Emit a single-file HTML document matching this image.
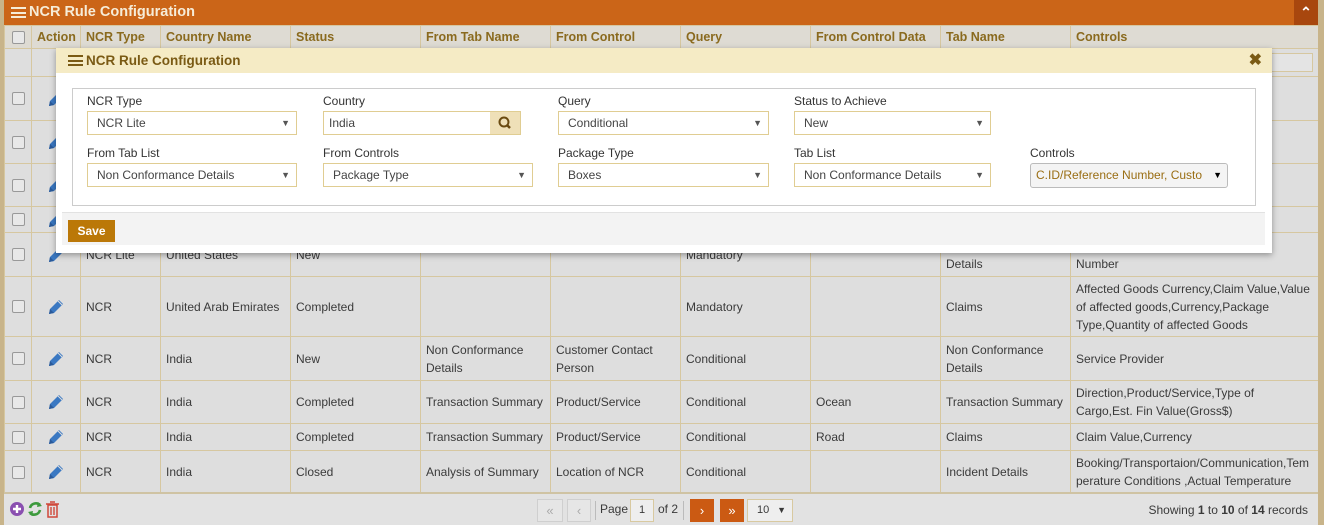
<!DOCTYPE html>
<html><head><meta charset="utf-8">
<style>
*{box-sizing:border-box;margin:0;padding:0}
body{width:1324px;height:525px;overflow:hidden;background:#c8b48a;font-family:"Liberation Sans",sans-serif;font-size:12px;color:#3a3a3a;position:relative}
.wrap{position:absolute;left:4px;top:0;width:1314px;height:525px;background:#dedede;overflow:hidden}
.title{position:absolute;left:0;top:0;width:1314px;height:25px;background:#cb6518;color:#f6ecd8;font-weight:bold;font-size:14.5px;line-height:25px;padding-left:25px}
.ham{position:absolute;width:15px;height:11px;border-top:2px solid;border-bottom:2px solid}
.ham:after{content:"";position:absolute;left:0;right:0;top:2.5px;height:2px;background:currentColor}
.up{position:absolute;right:0;top:0;width:24px;height:25px;background:#a8470e;color:#fff;text-align:center;font-size:14px}
table{position:absolute;left:0;top:25px;width:1314px;border-collapse:collapse;table-layout:fixed}
td,th{border:1px solid #d6c7a0;padding:0 5px;vertical-align:middle;line-height:18px;overflow:hidden}
th{background:#dedbd3;color:#8a6a1e;font-weight:bold;text-align:left;height:23px;font-size:12.5px;white-space:nowrap}
td{background:#dedede}
.cb{width:13px;height:13px;border:1px solid #999;border-radius:2px;background:#e8e8e8;margin:auto}
.pen{display:block;margin:auto}
.modal{position:absolute;left:56px;top:48px;width:1216px;height:205px;background:#fff;box-shadow:0 2px 6px rgba(0,0,0,.35)}
.mh{height:25px;background:#f5ebc5;color:#7a5a14;font-weight:bold;font-size:13.5px;line-height:25px;padding-left:30px;position:relative}
.fs{position:absolute;left:16px;top:40px;width:1184px;height:118px;border:1px solid #ccc}
.lbl{position:absolute;font-size:12px;color:#333}
.sel{position:absolute;height:24px;border:1px solid #e0cd92;font-size:12px;line-height:22px;padding-left:9px;color:#444;background:#fff}
.sel i{position:absolute;right:6px;top:0;font-style:normal;font-size:9px;color:#555}
.mf{position:absolute;left:6px;top:164px;width:1203px;height:33px;background:#f3f3f3;border-top:1px solid #e2e2e2}
.save{position:absolute;left:6px;top:7px;width:47px;height:22px;background:#bb7808;color:#fff;font-weight:bold;font-size:12px;line-height:22px;text-align:center}
.foot{position:absolute;left:0;top:492px;width:1314px;height:33px;background:#e2e2e2;border-top:2px solid #cfc3a3}
.pb{position:absolute;top:5px;height:23px;border:1px solid #cfcfcf;background:#e6e6e6;color:#aaa;text-align:center;line-height:21px;font-size:13px}
.pbo{background:#cb5a13;border-color:#cb5a13;color:#fff}
</style></head><body>
<div class="wrap">
<div class="title"><span class="ham" style="left:7px;top:7px;color:#f6ecd8"></span>NCR Rule Configuration<div class="up">&#8963;</div></div>
<table>
<colgroup><col style="width:27px"><col style="width:49px"><col style="width:80px"><col style="width:130px"><col style="width:130px"><col style="width:130px"><col style="width:130px"><col style="width:130px"><col style="width:130px"><col style="width:130px"><col style="width:248px"></colgroup>
<tr><th><div class="cb"></div></th><th>Action</th><th>NCR Type</th><th>Country Name</th><th>Status</th><th>From Tab Name</th><th>From Control</th><th>Query</th><th>From Control Data</th><th>Tab Name</th><th>Controls</th></tr>
<tr style="height:28px"><td></td><td></td><td></td><td></td><td></td><td></td><td></td><td></td><td></td><td></td><td><div style="height:19px;border:1px solid #d6c7a0;background:#e4e4e4"></div></td></tr>
<tr style="height:44px"><td><div class="cb"></div></td><td>P</td><td></td><td></td><td></td><td></td><td></td><td></td><td></td><td></td><td></td></tr>
<tr style="height:43px"><td><div class="cb"></div></td><td>P</td><td></td><td></td><td></td><td></td><td></td><td></td><td></td><td></td><td></td></tr>
<tr style="height:43px"><td><div class="cb"></div></td><td>P</td><td></td><td></td><td></td><td></td><td></td><td></td><td></td><td></td><td></td></tr>
<tr style="height:26px"><td><div class="cb"></div></td><td>P</td><td></td><td></td><td></td><td></td><td></td><td></td><td></td><td></td><td></td></tr>
<tr style="height:44px"><td><div class="cb"></div></td><td>P</td><td>NCR Lite</td><td>United States</td><td>New</td><td></td><td></td><td>Mandatory</td><td></td><td>Non Conformance Details</td><td>C.ID/Reference<br>Number</td></tr>
<tr style="height:60px"><td><div class="cb"></div></td><td>P</td><td>NCR</td><td style="white-space:nowrap">United Arab Emirates</td><td>Completed</td><td></td><td></td><td>Mandatory</td><td></td><td>Claims</td><td>Affected Goods Currency,Claim Value,Value<br>of affected goods,Currency,Package<br>Type,Quantity of affected Goods</td></tr>
<tr style="height:44px"><td><div class="cb"></div></td><td>P</td><td>NCR</td><td>India</td><td>New</td><td>Non Conformance Details</td><td>Customer Contact Person</td><td>Conditional</td><td></td><td>Non Conformance Details</td><td>Service Provider</td></tr>
<tr style="height:43px"><td><div class="cb"></div></td><td>P</td><td>NCR</td><td>India</td><td>Completed</td><td style="white-space:nowrap">Transaction Summary</td><td>Product/Service</td><td>Conditional</td><td>Ocean</td><td style="white-space:nowrap">Transaction Summary</td><td>Direction,Product/Service,Type of<br>Cargo,Est. Fin Value(Gross$)</td></tr>
<tr style="height:27px"><td><div class="cb"></div></td><td>P</td><td>NCR</td><td>India</td><td>Completed</td><td style="white-space:nowrap">Transaction Summary</td><td>Product/Service</td><td>Conditional</td><td>Road</td><td>Claims</td><td>Claim Value,Currency</td></tr>
<tr style="height:43px"><td><div class="cb"></div></td><td>P</td><td>NCR</td><td>India</td><td>Closed</td><td style="white-space:nowrap">Analysis of Summary</td><td>Location of NCR</td><td>Conditional</td><td></td><td>Incident Details</td><td style="word-break:break-all">Booking/Transportaion/Communication,Temperature Conditions ,Actual Temperature</td></tr>
</table>
<div class="foot">
<svg style="position:absolute;left:5px;top:6px" width="50" height="18"><circle cx="8" cy="9" r="7" fill="#8a4fb0"/><path d="M8 5v8M4 9h8" stroke="#fff" stroke-width="2.4"/><path d="M21 8a6 6 0 0 1 10-3M31 10a6 6 0 0 1-10 3" stroke="#3d9a3d" stroke-width="2.6" fill="none"/><path d="M29 2l4 4-5 1zM23 16l-4-4 5-1z" fill="#3d9a3d"/><rect x="39" y="5" width="9" height="12" fill="none" stroke="#d0483a" stroke-width="1.5"/><path d="M37 4h13M41 2h5M42 7v8M45 7v8" stroke="#d0483a" stroke-width="1.4"/></svg>
<div class="pb" style="left:533px;width:26px">&laquo;</div>
<div class="pb" style="left:563px;width:24px">&lsaquo;</div>
<div style="position:absolute;left:591px;top:7px;height:19px;border-left:1px solid #bbb"></div>
<div style="position:absolute;left:596px;top:8px;font-size:12px">Page</div>
<div style="position:absolute;left:626px;top:5px;width:24px;height:23px;border:1px solid #d8c9a0;background:#eee;text-align:center;line-height:21px;font-size:11px">1</div>
<div style="position:absolute;left:654px;top:8px;font-size:12px">of 2</div>
<div style="position:absolute;left:679px;top:7px;height:19px;border-left:1px solid #bbb"></div>
<div class="pb pbo" style="left:686px;width:24px">&rsaquo;</div>
<div class="pb pbo" style="left:716px;width:24px">&raquo;</div>
<div style="position:absolute;left:743px;top:5px;width:46px;height:23px;border:1px solid #d8c9a0;background:#eee;font-size:11px;line-height:21px;padding-left:9px">10<span style="position:absolute;right:6px;font-size:9px">&#9660;</span></div>
<div style="position:absolute;right:10px;top:9px;font-size:12px">Showing <b>1</b> to <b>10</b> of <b>14</b> records</div>
</div>
</div>
<div class="modal">
<div class="mh"><span class="ham" style="left:12px;top:7px;color:#7a5a14"></span>NCR Rule Configuration<span style="position:absolute;right:10px;top:0;color:#7a5a14;font-size:16px">&#10006;</span></div>
<div class="fs"></div>
<div class="lbl" style="left:31px;top:46px">NCR Type</div>
<div class="sel" style="left:31px;top:63px;width:210px">NCR Lite<i>&#9660;</i></div>
<div class="lbl" style="left:267px;top:46px">Country</div>
<div class="sel" style="left:267px;top:63px;width:198px;padding-left:5px">India<span style="position:absolute;right:0;top:0;width:30px;height:22px;background:#efe0b8"><svg width="30" height="22"><circle cx="14" cy="10" r="4.5" fill="none" stroke="#6a4a10" stroke-width="2"/><path d="M17 13l3 3" stroke="#6a4a10" stroke-width="2.5"/></svg></span></div>
<div class="lbl" style="left:502px;top:46px">Query</div>
<div class="sel" style="left:502px;top:63px;width:211px">Conditional<i>&#9660;</i></div>
<div class="lbl" style="left:738px;top:46px">Status to Achieve</div>
<div class="sel" style="left:738px;top:63px;width:197px">New<i>&#9660;</i></div>
<div class="lbl" style="left:31px;top:98px">From Tab List</div>
<div class="sel" style="left:31px;top:115px;width:210px">Non Conformance Details<i>&#9660;</i></div>
<div class="lbl" style="left:267px;top:98px">From Controls</div>
<div class="sel" style="left:267px;top:115px;width:210px">Package Type<i>&#9660;</i></div>
<div class="lbl" style="left:502px;top:98px">Package Type</div>
<div class="sel" style="left:502px;top:115px;width:211px">Boxes<i>&#9660;</i></div>
<div class="lbl" style="left:738px;top:98px">Tab List</div>
<div class="sel" style="left:738px;top:115px;width:197px">Non Conformance Details<i>&#9660;</i></div>
<div class="lbl" style="left:974px;top:98px">Controls</div>
<div class="sel" style="left:974px;top:115px;width:198px;height:25px;border:1px solid #bbb;border-radius:3px;background:#f4f4f4;color:#9a6e14;padding-left:5px;overflow:hidden;white-space:nowrap">C.ID/Reference Number, Custo<i style="background:#f4f4f4;color:#000;padding:0 4px;right:1px">&#9660;</i></div>
<div class="mf"><div class="save">Save</div></div>
</div>
<script>
document.querySelectorAll('td').forEach(function(t){if(t.textContent==='P'){t.innerHTML='<svg class="pen" width="18" height="18" viewBox="0 0 18 18"><path d="M2 16l1-5L12 2l4 4-9 9z" fill="#3a78c2"/><path d="M2 16l1-5 4 4z" fill="#2a5a9a"/><path d="M11 3l4 4" stroke="#dedede" stroke-width="1"/></svg>';}});
</script>
</body></html>
